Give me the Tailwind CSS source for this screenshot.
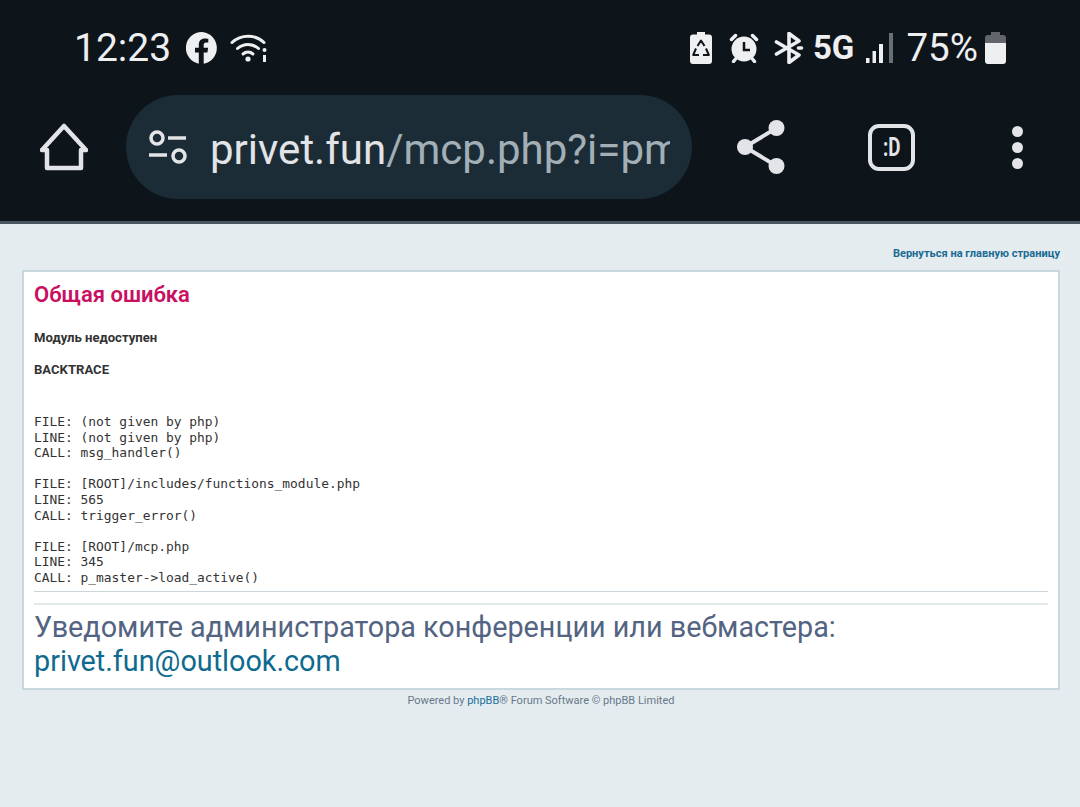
<!DOCTYPE html>
<html lang="en">
<head>
    <meta charset="UTF-8">
    <meta name="viewport" content="width=device-width, initial-scale=1.0">
    <title>Общая ошибка</title>
    <script src="https://cdn.jsdelivr.net/npm/@tailwindcss/browser@4"></script>
</head>
<body class="bg-[#e4ecef] min-h-screen font-['Roboto',sans-serif] overflow-hidden">
    <!-- status bar + browser toolbar -->
    <header class="bg-[#0d141a] h-[224px] border-b-[3px] border-[#4b555e] text-[#eeeff0]">
        <div class="flex items-center h-[95px] pl-[74px] pr-[74px]">
            <span class="text-[39px] leading-none w-[112px] pt-[2px]">12:23</span>
            <svg class="w-[32px] h-[32px]" viewBox="0 0 32 32"><path fill="#eeeff0" d="M16 0a16 16 0 0 0-3.2 31.7V20.4H9v-4.6h3.8v-3.2c0-4 2.4-6.2 6-6.2 1.7 0 3.5.3 3.5.3v3.9h-2c-2 0-2.6 1.2-2.6 2.5v2.7h4.4l-.7 4.6h-3.7v11.3A16 16 0 0 0 16 0z"/></svg>
            <svg class="w-[38px] h-[30px] ml-[12px]" viewBox="0 0 38 30" fill="none" stroke="#eeeff0" stroke-width="3" stroke-linecap="round"><path d="M2 9.500c9-8.500 23-8.500 32 0"/><path d="M7.500 15.500c6-5.500 15-5.500 21 0"/><path d="M13 21c3-2.600 7-2.600 10 0"/><circle cx="18" cy="26" r="2.600" fill="#eeeff0" stroke="none"/><circle cx="34.500" cy="17" r="2" fill="#eeeff0" stroke="none"/><path d="M34.500 22v7" stroke-linecap="butt"/></svg>
            <div class="flex-1"></div>
            <svg class="w-[22px] h-[32px]" viewBox="0 0 22 32"><path fill="#eeeff0" d="M7 0h8v2.500h4a3 3 0 0 1 3 3V29a3 3 0 0 1-3 3H3a3 3 0 0 1-3-3V5.500a3 3 0 0 1 3-3h4z"/><path fill="none" stroke="#0d141a" stroke-width="2" stroke-linejoin="round" d="M7.500 14L11 8.500l3.500 5.500M16 16.500l2.800 6.500H13M9 23H3.200L6 16.500"/></svg>
            <svg class="w-[30px] h-[30px] ml-[17px]" viewBox="0 0 30 30"><circle cx="15" cy="16" r="12.500" fill="#eeeff0"/><path d="M2.500 6.500l4-4M27.500 6.500l-4-4M6.500 26l-2 2.500M23.500 26l2 2.500" stroke="#eeeff0" stroke-width="3.500" stroke-linecap="round"/><path d="M15 9v8h6" fill="none" stroke="#0d141a" stroke-width="2.500"/></svg>
            <svg class="w-[30px] h-[32px] ml-[15px]" viewBox="0 0 30 32" fill="none" stroke="#eeeff0" stroke-width="3.600" stroke-linejoin="round" stroke-linecap="round"><path d="M2.500 10L25 23l-10 7.500V1.500L25 9 2.500 22"/><path d="M24.500 16h3"/></svg>
            <span class="text-[33px] font-bold leading-none ml-[9px]">5G</span>
            <svg class="w-[28px] h-[30px] ml-[11px]" viewBox="0 0 28 30"><path fill="#eeeff0" d="M1 25h3.500v5H1zM7.500 18h3.500v12H7.500zM14 11h4v19h-4z"/><path fill="#6a6f75" d="M24 0h4v30h-4z"/></svg>
            <span class="text-[38.6px] leading-none ml-[13px] pt-[2px]">75%</span>
            <svg class="w-[21px] h-[32px] ml-[7px]" viewBox="0 0 21 32"><path fill="#62666c" d="M6 0h9v3h3a3 3 0 0 1 3 3v5H0V6a3 3 0 0 1 3-3h3z"/><path fill="#eeeff0" d="M0 11h21v18a3 3 0 0 1-3 3H3a3 3 0 0 1-3-3z"/></svg>
        </div>
        <div class="flex items-center h-[104px] text-[#e2e4e7]">
            <div class="w-[126px] flex justify-center pl-[1px] pr-[2px]">
                <svg class="w-[48px] h-[48px] mr-[-2px]" viewBox="0 0 48 48" fill="none" stroke="#e2e4e7" stroke-width="4.500" stroke-linejoin="round" stroke-linecap="round"><path d="M2 27L24 3l22 24h-5v18H7V27z"/></svg>
            </div>
            <div class="w-[566px] h-[104px] rounded-[52px] bg-[#1c2c36] flex items-center pl-[22px] pr-[22px]">
                <svg class="w-[40px] h-[34px] shrink-0" viewBox="0 0 40 34" fill="none" stroke="#e2e4e7" stroke-width="3.500"><circle cx="9" cy="8" r="6"/><path d="M20 8h18M1 25h18"/><circle cx="31" cy="26" r="6"/></svg>
                <div class="ml-[22px] pt-[5px] overflow-hidden whitespace-nowrap text-[42px] leading-[48px]">privet.fun<span class="text-[#a2afb7]">/mcp.php?i=pm</span></div>
            </div>
            <div class="flex-1 flex items-center">
                <svg class="w-[48px] h-[54px] ml-[45px]" viewBox="0 0 48 54" fill="#e2e4e7"><circle cx="39.500" cy="8" r="8"/><circle cx="8" cy="27" r="8"/><circle cx="39.500" cy="46" r="8"/><path d="M39.500 8L8 27l31.500 19" fill="none" stroke="#e2e4e7" stroke-width="4"/></svg>
                <div class="w-[47px] h-[47px] ml-[83px] border-[4px] border-[#e2e4e7] rounded-[11px] flex items-center justify-center text-[25px] font-bold leading-none"><span class="scale-x-75">:D</span></div>
                <div class="ml-[97px] flex flex-col gap-[5px]">
                    <span class="w-[11px] h-[11px] rounded-full bg-[#e2e4e7]"></span>
                    <span class="w-[11px] h-[11px] rounded-full bg-[#e2e4e7]"></span>
                    <span class="w-[11px] h-[11px] rounded-full bg-[#e2e4e7]"></span>
                </div>
            </div>
        </div>
    </header>

    <main class="pl-[22px] pr-[20px]">
        <div class="text-right text-[11.05px] leading-[13px] font-bold text-[#1a6a94] pt-[23px] pb-[10px]">Вернуться на главную страницу</div>
        <div class="bg-white border-2 border-[#c9d7de] h-[420px] px-[10px] text-[#333]">
            <h2 class="text-[22px] leading-[25px] font-semibold text-[#c90f5f] pt-[10px] h-[36px] box-content">Общая ошибка</h2>
            <p class="text-[13.1px] leading-[16px] font-bold mt-[-1px] pt-[13px]">Модуль недоступен</p>
            <p class="text-[13.1px] leading-[16px] font-bold mt-[16px]">BACKTRACE</p>
            <pre class="font-['DejaVu_Sans_Mono',monospace] text-[12.9px] leading-[15.6px] mt-[36px] text-[#333]">FILE: (not given by php)
LINE: (not given by php)
CALL: msg_handler()

FILE: [ROOT]/includes/functions_module.php
LINE: 565
CALL: trigger_error()

FILE: [ROOT]/mcp.php
LINE: 345
CALL: p_master-&gt;load_active()</pre>
            <div class="border-t border-[#ccd5da] mt-[5px]"></div>
            <div class="border-t-2 border-[#e3e8eb] mt-[11px]"></div>
            <p class="text-[28.75px] leading-[34px] text-[#536482] mt-[5px]">Уведомите администратора конференции или вебмастера:<br><a class="text-[#0f6a8f]">privet.fun@outlook.com</a></p>
        </div>
        <div class="text-center text-[11px] leading-[13px] text-[#68788a] pt-[4px]">Powered by <span class="text-[#1a6f9c]">phpBB</span>® Forum Software © phpBB Limited</div>
    </main>
</body>
</html>
